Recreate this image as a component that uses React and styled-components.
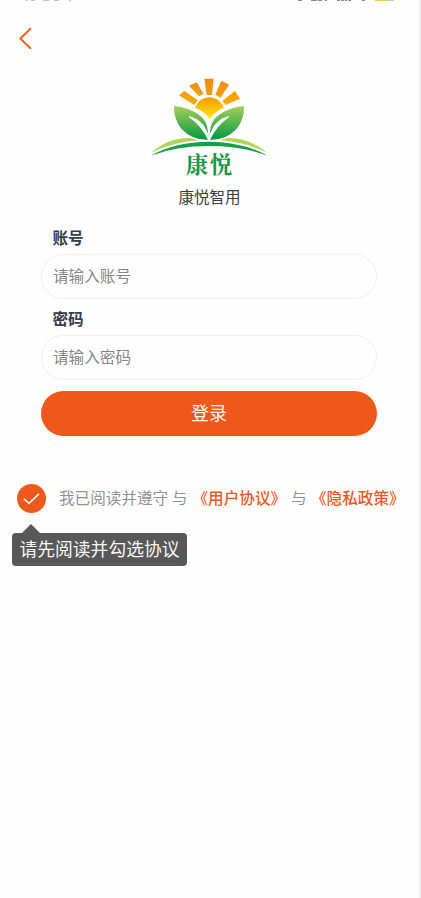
import React, { useState } from "react";
import styled, { createGlobalStyle } from "styled-components";

const ORANGE = "#ee581a";

const GlobalStyle = createGlobalStyle`
  * { box-sizing: border-box; }
  body {
    margin: 0;
    background: #fefefe;
    font-family: "Noto Sans CJK SC", sans-serif;
    overflow: hidden;
  }
`;

const Screen = styled.main`
  width: 421px;
  height: 898px;
  border-right: 2px solid #eeeeee;
  background: #fefefe;
  display: flex;
  flex-direction: column;
`;

const StatusBar = styled.header`
  height: 3px;
  svg { display: block; }
`;

const NavBar = styled.nav`
  height: 67px;
  padding: 24px 0 0 18px;
`;

const BackButton = styled.button`
  display: block;
  width: 15px;
  height: 24px;
  padding: 0;
  border: 0;
  background: none;
  svg { display: block; }
`;

const Brand = styled.section`
  display: flex;
  flex-direction: column;
  align-items: center;
  height: 155px;
  svg { display: block; flex: none; }
`;

const AppName = styled.h1`
  margin: 4px 0 0;
  font-size: 15.5px;
  line-height: 24px;
  font-weight: 400;
  color: #3c3c3c;
`;

const Form = styled.form`
  display: flex;
  flex-direction: column;
  margin: 0 42px 0 41px;
`;

const Label = styled.label`
  height: 24px;
  margin: ${(p) => (p.$first ? "0 0 4.5px" : "6.5px 0 5px")};
  padding-left: 11.5px;
  font-size: 15.6px;
  line-height: 24px;
  font-weight: 700;
  color: #353c49;
`;

const Field = styled.input`
  width: 100%;
  height: 45.5px;
  padding: 0 11px 2px;
  border: 1px solid #f0f0f0;
  border-radius: 23px;
  outline: 0;
  background: #fefefe;
  font-family: inherit;
  font-size: 15.6px;
  color: #333;
  &::placeholder { color: #858585; opacity: 1; }
`;

const LoginButton = styled.button`
  height: 45px;
  margin-top: 10.5px;
  padding: 0 0 2px;
  border: 0;
  border-radius: 23px;
  background: ${ORANGE};
  color: #fff4ee;
  font-family: inherit;
  font-size: 18px;
`;

const Agreement = styled.div`
  position: relative;
  display: flex;
  align-items: center;
  height: 30px;
  margin-top: 48px;
  padding-left: 17px;
  font-size: 15.6px;
  white-space: nowrap;
  color: #929292;
`;

const Check = styled.button`
  width: 29px;
  height: 29px;
  flex: none;
  padding: 0;
  margin-right: 13px;
  border: 0;
  border-radius: 50%;
  background: ${ORANGE};
  svg { display: block; }
`;

const Phrase = styled.span`
  width: ${(p) => p.$w}px;
  flex: none;
  padding-bottom: 3px;
`;

const Policy = styled.a`
  width: ${(p) => p.$w}px;
  flex: none;
  padding-bottom: 3px;
  font-weight: 500;
  color: ${ORANGE};
`;

const Tooltip = styled.div`
  position: absolute;
  left: 12px;
  top: 49px;
  width: 175px;
  height: 33px;
  border-radius: 4px;
  background: #585858;
  color: #f7f7f7;
  font-size: 17.8px;
  line-height: 31px;
  text-align: center;
  &::before {
    content: "";
    position: absolute;
    left: 10px;
    top: -9px;
    border: 9px solid transparent;
    border-top: 0;
    border-bottom-color: #585858;
  }
`;

const LogoArt = () => (
  <svg width="130" height="110" viewBox="0 0 390 330" role="img" aria-label="康悦">
    <defs>
      <linearGradient id="ray" x1="0" y1="25" x2="0" y2="125" gradientUnits="userSpaceOnUse">
        <stop offset="0" stopColor="#f08519" />
        <stop offset="1" stopColor="#fcb800" />
      </linearGradient>
      <linearGradient id="sun" x1="0" y1="82" x2="0" y2="145" gradientUnits="userSpaceOnUse">
        <stop offset="0" stopColor="#f59a0c" />
        <stop offset="1" stopColor="#ffe600" />
      </linearGradient>
      <linearGradient id="leaf" x1="0" y1="108" x2="0" y2="210" gradientUnits="userSpaceOnUse">
        <stop offset="0" stopColor="#a5cf5a" />
        <stop offset=".55" stopColor="#4db14b" />
        <stop offset="1" stopColor="#009944" />
      </linearGradient>
    </defs>
    <g fill="url(#ray)">
      <path d="M102 76 118 63 159 91 147 105Z" />
      <path d="M132 47 155 37 176 72 162 79Z" />
      <path d="M178 26H206L201 75H185Z" />
      <path d="M229 32 253 44 226 83 211 74Z" />
      <path d="M270 63 285 86 242 105 232 92Z" />
    </g>
    <path d="M150 113Q164 82 193 82T237 113Q208 124 194 147Q179 124 150 113Z" fill="url(#sun)" />
    <path d="M17 249Q70 203 135 204L160 211Q82 216 17 249ZM367 249Q312 203 249 204L224 211Q302 216 367 249Z" fill="#b2d454" />
    <path d="M17 257Q91 215 192 215T367 257Q290 228 192 228T17 257Z" fill="#16a04a" />
    <path d="M87 108Q150 116 176 148Q191 166 190 210Q140 210 109 176Q86 149 87 108Z" fill="url(#leaf)" />
    <path d="M132 140Q159 145 176 168Q189 186 192 213Q171 166 132 140Z" fill="#fefefe" stroke="#fefefe" strokeWidth="3" />
    <path d="M297 108Q234 116 208 148Q193 166 194 210Q244 210 275 176Q298 149 297 108Z" fill="url(#leaf)" />
    <path d="M252 140Q225 145 208 168Q195 186 192 213Q213 166 252 140Z" fill="#fefefe" stroke="#fefefe" strokeWidth="3" />
    <text x="122" y="309" fontSize="67" letterSpacing="5" fontWeight="700" fontFamily='"Noto Serif CJK SC", "Noto Sans CJK SC", serif' fill="#179648">康悦</text>
  </svg>
);

export default function App() {
  const [checked, setChecked] = useState(true);
  return (
    <>
      <GlobalStyle />
      <Screen>
        <StatusBar>
          <svg width="419" height="3">
            <path d="M26 0h2v1h-2zM31 0h4v1h-4zM43 0h6v1h-6zM54 0h5v1h-5zM69 0h2v1h-2z" fill="#c4c4c4" />
            <path d="M298 0h4v1h-4zM311 0h6v1h-6zM318 0h4v1h-4zM325 0h2v1h-2zM337 0h3v1h-3zM341 0h3v1h-3zM345 0h2v1h-2zM348 0h3v1h-3zM362 0h3v1h-3z" fill="#888" />
            <path d="M375 0h13v1h-13z" fill="#fac858" />
            <path d="M388 0h6v1h-6z" fill="#c4c4c4" />
          </svg>
        </StatusBar>
        <NavBar>
          <BackButton aria-label="返回">
            <svg width="15" height="24" viewBox="0 0 15 24" fill="none" stroke="#fa5a19" strokeWidth="1.9" strokeLinecap="round" strokeLinejoin="round">
              <path d="M12.5 1.8 2.3 11.5 12.5 21.2" />
            </svg>
          </BackButton>
        </NavBar>
        <Brand>
          <LogoArt />
          <AppName>康悦智用</AppName>
        </Brand>
        <Form onSubmit={(e) => e.preventDefault()}>
          <Label $first htmlFor="account">账号</Label>
          <Field id="account" placeholder="请输入账号" />
          <Label htmlFor="password">密码</Label>
          <Field id="password" type="password" placeholder="请输入密码" />
          <LoginButton>登录</LoginButton>
        </Form>
        <Agreement>
          <Check aria-label="同意" onClick={() => setChecked(!checked)}>
            {checked && (
              <svg width="29" height="29" viewBox="0 0 29 29" fill="none" stroke="#fff4ee" strokeWidth="1.7">
                <path d="M7 14.8 12 19.3 22 9.8" />
              </svg>
            )}
          </Check>
          <Phrase $w={133.5}>我已阅读并遵守 与</Phrase>
          <Policy $w={98.5}>《用户协议》</Policy>
          <Phrase $w={20}>与</Phrase>
          <Policy $w={95}>《隐私政策》</Policy>
          <Tooltip role="tooltip">请先阅读并勾选协议</Tooltip>
        </Agreement>
      </Screen>
    </>
  );
}
